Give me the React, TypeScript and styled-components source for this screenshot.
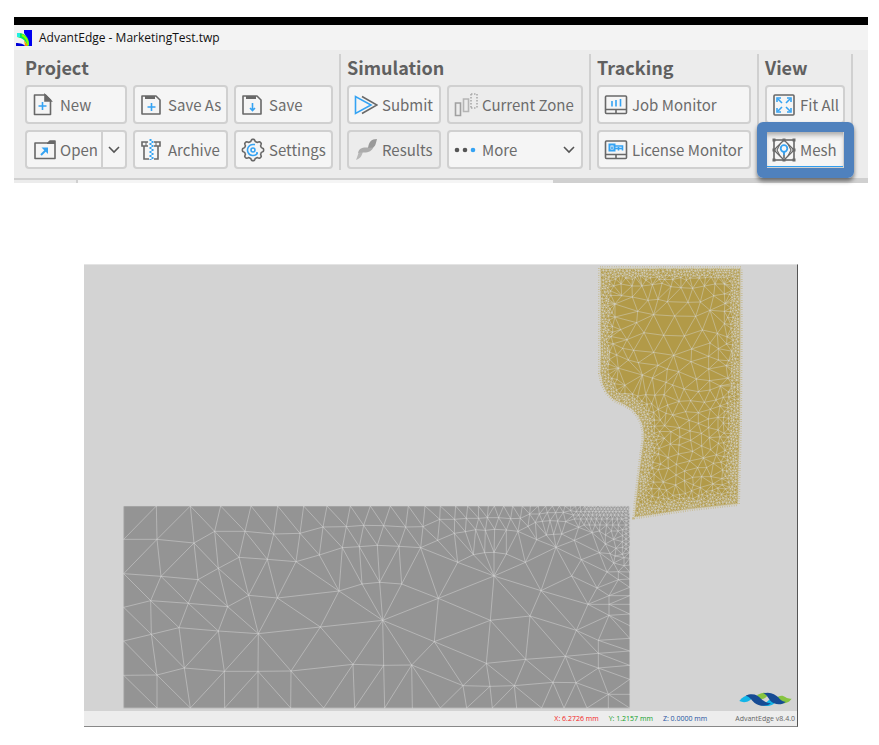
import React from "react";
import styled, { createGlobalStyle, css } from "styled-components";

const GlobalStyle = createGlobalStyle`
  * { box-sizing: border-box; }
  body { margin: 0; background: #fff; color: #666; font-family: "Noto Sans CJK SC", "Open Sans", sans-serif; }
`;

/* ---------- mesh geometry (three drawing units per pixel) ---------- */

type Pt = [number, number];

const shift = (points: Pt[], dx: number, dy: number): Pt[] =>
  points.map(([x, y]) => [x + dx, y + dy]);

const row = (y: number, xs: number[]): Pt[] => xs.map((x) => [x, y]);
const column = (x: number, ys: number[]): Pt[] => ys.map((y) => [x, y]);

function makeRandom(seed: number) {
  let s = seed;
  return () => {
    s = (s * 1664525 + 1013904223) % 4294967296;
    return s / 4294967296;
  };
}

interface Tri { a: number; b: number; c: number; x: number; y: number; r: number; }

function triangulate(input: Pt[]): { points: Pt[]; triangles: Tri[] } {
  const n = input.length;
  const rnd = makeRandom(7);
  const points: Pt[] = input.map(([x, y]) => [x + rnd() * 0.01, y + rnd() * 0.01]);
  points.push([-90000, -60000], [90000, -60000], [0, 120000]);
  const make = (a: number, b: number, c: number): Tri => {
    const [ax, ay] = points[a];
    const bx = points[b][0] - ax, by = points[b][1] - ay;
    const cx = points[c][0] - ax, cy = points[c][1] - ay;
    const d = 2 * (bx * cy - by * cx) || 1e-9;
    const ux = (cy * (bx * bx + by * by) - by * (cx * cx + cy * cy)) / d;
    const uy = (bx * (cx * cx + cy * cy) - cx * (bx * bx + by * by)) / d;
    return { a, b, c, x: ax + ux, y: ay + uy, r: ux * ux + uy * uy };
  };
  let triangles: Tri[] = [make(n, n + 1, n + 2)];
  for (let i = 0; i < n; i++) {
    const [px, py] = points[i];
    const keep: Tri[] = [];
    const rim = new Map<string, [number, number]>();
    for (const t of triangles) {
      if ((t.x - px) ** 2 + (t.y - py) ** 2 < t.r) {
        for (const [p, q] of [[t.a, t.b], [t.b, t.c], [t.c, t.a]]) {
          const key = p < q ? `${p},${q}` : `${q},${p}`;
          if (rim.has(key)) rim.delete(key);
          else rim.set(key, [p, q]);
        }
      } else keep.push(t);
    }
    rim.forEach(([p, q]) => keep.push(make(p, q, i)));
    triangles = keep;
  }
  return { points, triangles: triangles.filter((t) => t.a < n && t.b < n && t.c < n) };
}

function inside(poly: Pt[], x: number, y: number) {
  let hit = false;
  for (let i = 0, j = poly.length - 1; i < poly.length; j = i++) {
    const [xi, yi] = poly[i], [xj, yj] = poly[j];
    if (yi > y !== yj > y && x < ((xj - xi) * (y - yi)) / (yj - yi) + xi) hit = !hit;
  }
  return hit;
}

function edgeDistance(poly: Pt[], x: number, y: number) {
  let best = 1e9;
  for (let i = 0, j = poly.length - 1; i < poly.length; j = i++) {
    const [ax, ay] = poly[j], [bx, by] = poly[i];
    const dx = bx - ax, dy = by - ay;
    const t = Math.max(0, Math.min(1, ((x - ax) * dx + (y - ay) * dy) / (dx * dx + dy * dy)));
    best = Math.min(best, Math.hypot(x - ax - t * dx, y - ay - t * dy));
  }
  return best;
}

function meshPaths(input: Pt[], poly?: Pt[]) {
  const { points, triangles } = triangulate(input);
  const edges = new Set<string>();
  for (const t of triangles) {
    const cx = (points[t.a][0] + points[t.b][0] + points[t.c][0]) / 3;
    const cy = (points[t.a][1] + points[t.b][1] + points[t.c][1]) / 3;
    if (poly && !inside(poly, cx, cy)) continue;
    for (const [p, q] of [[t.a, t.b], [t.b, t.c], [t.c, t.a]]) edges.add(p < q ? `${p},${q}` : `${q},${p}`);
  }
  const f = (v: number) => v.toFixed(1);
  let lines = "";
  edges.forEach((key) => {
    const [p, q] = key.split(",").map(Number);
    lines += `M${f(points[p][0])} ${f(points[p][1])}L${f(points[q][0])} ${f(points[q][1])}`;
  });
  const nodes = input.map(([x, y]) => `M${f(x - 1)} ${f(y)}h2`).join("");
  return { lines, nodes };
}

const coarsePart: Pt[] = [
  ...row(33, [41, 139, 241, 332, 423, 503, 581, 651, 721, 781]),
  [41, 133], [141, 133], [252, 144], [314, 109], [405, 109], [491, 117], [570, 115], [639, 96], [709, 95], [761, 91],
  [41, 236], [153, 244], [264, 254], [325, 220], [387, 187], [472, 193], [558, 200], [628, 180], [697, 158], [748, 155],
  [41, 337], [122, 317], [235, 325], [353, 335], [416, 301], [502, 309], [687, 288], [756, 267],
  [41, 438], [124, 418], [207, 398], [325, 408], [445, 416], [631, 396],
  [41, 541], [141, 540], [223, 519], [343, 529], [444, 529], [543, 528], [729, 508],
  ...row(639, [41, 141, 241, 344, 444, 542, 641, 734]),
];

const finePart: Pt[] = [
  ...row(33, [61, 115, 165, 211, 257, 293, 325, 355, 373, 401, 428, 457, 481, 505, 527, 547, 568, 585, 602, 617, 631, 644, 656, 668, 679, 689, 699, 709, 719, 729, 739, 749, 759, 769, 779]),
  [41, 92], [107, 96], [159, 95], [209, 73], [254, 73], [289, 70], [326, 70], [352, 68], [386, 68], [422, 71], [451, 70],
  [479, 57], [508, 57], [532, 53], [557, 53], [580, 52], [602, 47], [496, 82], [517, 79], [540, 77], [563, 78], [587, 80],
  [87, 154], [152, 158], [203, 136], [253, 115], [286, 110], [317, 104], [346, 106], [374, 103], [409, 105], [444, 109], [474, 94],
  [22, 151], [29, 262], [95, 267], [263, 202], [310, 179], [344, 173], [372, 172], [409, 177], [466, 202], [500, 134], [372, 243],
  [205, 310], [513, 287], [605, 243], [558, 157], [529, 120], [551, 118], [575, 117], [613, 136], [634, 194], [626, 97],
  [666, 113], [688, 173], [706, 147], [706, 120], [711, 231], [731, 204], [745, 230], [745, 254], [681, 279], [654, 328],
  [717, 302], [717, 328], [717, 361], [38, 376], [361, 376], [480, 363], [619, 406], [193, 440], [685, 436], [685, 475],
  [685, 519], [586, 484], [467, 493], [349, 505], [125, 510], [41, 511], [279, 572], [360, 574], [433, 572], [549, 562],
  [618, 563], [715, 598], [720, 176], [738, 160], [731, 133], [735, 183],
  ...row(42, [650, 663, 674, 684, 694, 704, 714, 724, 734, 744, 754, 764, 773]),
  ...row(50, [619, 632, 645, 657, 668, 678, 688, 698, 708, 718, 728, 738, 748, 758, 768]),
  ...row(60, [610, 626, 641, 655, 667, 679, 690, 701, 712, 723, 734, 745, 756]),
  ...row(72, [613, 632, 650, 664, 679, 695, 711, 727, 742, 755]),
  ...row(90, [642, 658, 675, 690, 710, 728, 745]),
  ...row(108, [688, 724, 744]),
  ...column(768, [60, 69, 78, 90, 102, 116, 132, 147, 162]),
  ...column(757, [104, 122, 140, 157, 178]),
  ...column(762, [188, 212]),
  ...column(779, [43, 53, 63, 74, 85, 97, 110, 125, 140, 155, 172, 190, 210, 231, 252, 277, 302, 328, 357, 392, 430, 468, 511, 553, 598]),
  ...row(639, [44, 127, 211, 290, 367, 440, 515, 582, 651, 715, 779]),
];

const workpiece = meshPaths([...coarsePart, ...shift(finePart, 780, 0)]);

const toolOutline: Pt[] = [
  [30, 24], [452, 24], [452, 240], [450, 500], [446, 640], [444, 732], [300, 748], [165, 768], [133, 772],
  [136, 735], [141, 690], [147, 640], [153, 590], [160, 540], [160, 515], [155, 490], [144, 468], [126, 448],
  [102, 434], [72, 420], [50, 398], [37, 372], [30, 340],
];

const toolNodes: Pt[] = [
  [93, 72], [126, 78], [156, 78], [187, 74], [216, 70], [243, 80], [273, 83], [308, 85], [343, 78], [375, 72], [403, 72],
  [95, 107], [127, 111], [174, 121], [204, 118], [232, 125], [294, 127], [331, 126], [371, 107], [403, 102],
  [143, 154], [191, 164], [254, 168], [317, 169], [360, 151], [403, 154], [140, 188], [162, 218], [221, 226], [283, 228],
  [337, 210], [382, 220], [92, 209], [111, 239], [131, 271], [191, 277], [251, 286], [305, 267], [360, 249], [303, 305],
  [356, 289], [356, 327], [204, 316], [232, 327], [266, 335], [319, 357], [157, 345], [115, 300], [145, 308], [187, 354],
  [282, 387], [228, 367], [359, 362], [403, 191], [385, 266], [385, 300], [75, 132], [75, 171], [98, 265],
  ...shift([
    [248, 15], [360, 30], [391, 18], [325, 35], [302, 62], [343, 67], [378, 60], [267, 64], [233, 75], [287, 95], [325, 98],
    [361, 88], [390, 78], [248, 105], [297, 121], [355, 117], [325, 130], [384, 112], [228, 100], [268, 143], [300, 153],
    [356, 143], [358, 173], [384, 150], [302, 181], [270, 171], [335, 198], [385, 190], [362, 209], [308, 214], [267, 195],
    [340, 234], [299, 243], [370, 250], [265, 222], [259, 253], [234, 233], [323, 263], [350, 263], [284, 273], [308, 292],
    [335, 290], [363, 290], [258, 285], [283, 302], [310, 315], [235, 265], [241, 192], [243, 155], [223, 175], [401, 230], [398, 270],
  ], 0, 360),
];

function fillTool(): Pt[] {
  const rnd = makeRandom(31);
  const out: Pt[] = [...toolNodes];
  for (let i = 0; i < toolOutline.length; i++) {
    const [ax, ay] = toolOutline[i];
    const [bx, by] = toolOutline[(i + 1) % toolOutline.length];
    const steps = Math.max(1, Math.round(Math.hypot(bx - ax, by - ay) / 6));
    for (let k = 0; k < steps; k++) out.push([ax + ((bx - ax) * k) / steps, ay + ((by - ay) * k) / steps]);
  }
  for (let k = 0; k < 30000; k++) {
    const x = 30 + rnd() * 422;
    const y = 24 + rnd() * 748;
    if (!inside(toolOutline, x, y)) continue;
    const d = edgeDistance(toolOutline, x, y);
    const widest = y < 400 ? 46 : 27;
    const growth = y < 400 ? 0.8 : 0.35;
    const gap = Math.min(widest, d < 26 ? 6.5 : 6.5 + (d - 26) * growth);
    if (out.every(([px, py]) => (px - x) ** 2 + (py - y) ** 2 > gap * gap)) out.push([x, y]);
  }
  return out;
}

const tool = meshPaths(fillTool(), toolOutline);
const toolShape = "M" + toolOutline.map((p) => p.join(" ")).join("L") + "Z";

/* ---------- layout ---------- */

const Page = styled.main`
  padding: 17px 11px 18px 14px;
`;

const Window = styled.header`
  border-top: 8px solid #000;
  background: #ececec;
`;

const TitleBar = styled.div`
  display: flex;
  align-items: center;
  gap: 7px;
  height: 25px;
  padding-left: 2px;
  background: #f3f3f3;
  color: #111;
  font: 12px/24px "Open Sans", "Noto Sans", sans-serif;
`;

const Ribbon = styled.div`
  display: flex;
  align-items: flex-start;
  padding: 4px 0 8px 11px;
  border-bottom: 2px solid #d0d0d0;
`;

const Group = styled.section`
  height: 116px;
  padding-right: 6px;
  margin-right: 6px;
  border-right: 2px solid #d0d0d0;
`;

const GroupTitle = styled.h2`
  margin: 0;
  height: 31px;
  font-size: 18px;
  line-height: 26px;
  font-weight: 700;
  color: #606060;
`;

const Grid = styled.div<{ $columns: string }>`
  display: grid;
  grid-template-columns: ${(p) => p.$columns};
  grid-auto-rows: 39px;
  gap: 6px;
`;

const face = css<{ $muted?: boolean }>`
  border: 2px solid #d0d0d0;
  background: ${(p) => (p.$muted ? "#ececec" : "#f5f5f5")};
  color: #6c6c6c;
  font: 15px/24px "Noto Sans CJK SC", sans-serif;
`;

const ToolButton = styled.button<{ $muted?: boolean }>`
  ${face}
  position: relative;
  display: flex;
  align-items: center;
  gap: 4px;
  min-width: 0;
  padding: 0 0 0 5px;
  border-radius: 4px;
  white-space: nowrap;
  text-align: left;
`;

const SplitButton = styled.div`
  display: grid;
  grid-template-columns: 1fr 26px;
`;

const SplitMain = styled(ToolButton)`
  border-radius: 4px 0 0 4px;
  border-right-width: 0;
`;

const SplitArrow = styled.button`
  ${face}
  display: grid;
  place-items: center;
  padding: 0;
  border-radius: 0 4px 4px 0;
`;

const Push = styled.span`
  display: flex;
  margin-left: auto;
  padding-right: 6px;
`;

const HighlightedButton = styled(ToolButton)`
  &::before {
    content: "";
    position: absolute;
    inset: 0;
    border-bottom: 1px solid #2f9df0;
    box-shadow: inset 0 5px 5px -2px #aaa;
  }
  &::after {
    content: "";
    position: absolute;
    inset: -10px -11px -11px -10px;
    border: 10px solid #4f81bd;
    border-radius: 6px;
    box-shadow: 0 3px 4px rgba(0, 0, 0, 0.5);
  }
`;

const TabStrip = styled.div`
  display: grid;
  grid-template-columns: 64px 475px 1fr;
  height: 3px;
  background: #d0d0d0;
`;

const Tab = styled.span<{ $active?: boolean }>`
  background: ${(p) => (p.$active ? "#f5f5f5" : "#ececec")};
  border-right: ${(p) => (p.$active ? 0 : 2)}px solid #d0d0d0;
`;

const Viewport = styled.section`
  margin: 81px 70px 0;
  border-top: 1px solid #e4e4e4;
  border-right: 1px solid #555;
  border-bottom: 1px solid #888;
  background: #d3d3d3;
`;

const Scene = styled.div`
  position: relative;
`;

const Drawing = styled.svg`
  display: block;
  width: 100%;
  height: auto;
`;

const LogoSpot = styled.div`
  position: absolute;
  display: flex;
  right: 5px;
  bottom: 4px;
`;

const StatusBar = styled.footer`
  display: flex;
  justify-content: flex-end;
  gap: 10px;
  height: 15px;
  padding-right: 2px;
  background: #ededed;
  font: 7px/15px "Open Sans", sans-serif;
`;

const Reading = styled.span<{ $color: string }>`
  color: ${(p) => p.$color};
`;

const Version = styled.span`
  margin-left: 18px;
  color: #666;
`;

/* ---------- icons ---------- */

const ink = "#686868";
const blue = "#35a3f3";

const Icon = ({ children }: { children: React.ReactNode }) => (
  <svg width="24" height="24" viewBox="0 0 24 24" fill="none" stroke={ink} strokeWidth="1.6" aria-hidden="true">
    {children}
  </svg>
);

const AppIcon = () => (
  <svg width="16" height="16" viewBox="0 0 16 16" aria-hidden="true">
    <path d="M8 0h8v16h-4C12 10 10 6 8 3z" fill="#0000f0" />
    <path d="M0 13c4 0 8 1 9 3H0z" fill="#0000d8" />
    <path d="M1 3C9 2 14 8 13 16h-2C10 10 6 8 1 7z" fill="#00e85a" />
    <path d="M6 5c4 2 6 6 6 10" stroke="#8cff00" strokeWidth="2" fill="none" />
    <path d="M8 10l4 6H9z" fill="#ff9a00" />
    <path d="M1 3h3v4H1z" fill="#20f0e0" />
  </svg>
);

const NewIcon = () => (
  <Icon>
    <path d="M2.5 2h11l5 5v14.5h-16z" strokeLinejoin="round" />
    <path d="M13 2v6h6z" fill={ink} />
    <path d="M10.5 9v8M6.5 13h8" stroke={blue} />
  </Icon>
);

const DiskIcon = ({ save }: { save?: boolean }) => (
  <Icon>
    <path d="M2 3h14l4 4v14H2z" strokeLinejoin="round" />
    <path d="M5 4.5h10" strokeWidth="3" />
    {save ? (
      <path d="M11.5 10v8M9 15l2.5 2.5L14 15" stroke={blue} />
    ) : (
      <path d="M11.5 10v8M7.5 14h8" stroke={blue} />
    )}
  </Icon>
);

const OpenIcon = () => (
  <Icon>
    <path d="M3 5h13l2-2h5v17.5H3z" strokeLinejoin="round" />
    <path d="M15 5l3-2h5v3h-8z" fill={ink} stroke="none" />
    <path d="M9 17l6-6" stroke={blue} strokeWidth="2" />
    <path d="M9.5 9.5H16V16z" fill={blue} stroke="none" />
  </Icon>
);

const ArchiveIcon = () => (
  <Icon>
    <path d="M8 4H2v4h6M14 4h6v4h-6M4 8v13h5M18 8v13h-4" />
    <path d="M10.5 1v21" stroke={blue} strokeWidth="2" strokeDasharray="2 2" />
    <path d="M12.5 3v20" stroke={blue} strokeWidth="2" strokeDasharray="2 2" />
    <path d="M6 4v4M16 4v4" strokeWidth="1" />
  </Icon>
);

const gearPath = (() => {
  let d = "";
  for (let i = 0; i <= 96; i++) {
    const a = (i / 96) * Math.PI * 2;
    const r = 9.6 + Math.max(-1, Math.min(1, 1.6 * Math.cos(a * 8)));
    d += `${i ? "L" : "M"}${(12 + r * Math.cos(a)).toFixed(2)} ${(12 + r * Math.sin(a)).toFixed(2)}`;
  }
  return d + "Z";
})();

const SettingsIcon = () => (
  <Icon>
    <path d={gearPath} />
    <path d="M12 6.5a5.5 5.5 0 1 0 4.5 8.7" stroke={blue} />
    <circle cx="12" cy="12" r="2" stroke={blue} />
    <path d="M12 6.5h2M16 14v2" stroke={blue} />
  </Icon>
);

const SubmitIcon = () => (
  <Icon>
    <path d="M8 3.5l15 8.5-15 8.5" />
    <path d="M1.5 3.5v17L17 12z" stroke={blue} />
  </Icon>
);

const ResultsIcon = () => (
  <Icon>
    <g stroke="none">
      <path d="M2 22C5 21 8 19 9 13H6C4 14 4 18 2 22z" fill="#b8b8b8" />
      <path d="M4 15C5 10 8 9 15 9.5L20 8C18 13 15 14.500 10 14.500 7 14.500 5 14.500 4 15z" fill="#acacac" />
      <path d="M23 1C17 1 15 4 14 10L19 9.500C22 8 22 4 23 1z" fill="#999" />
    </g>
  </Icon>
);

const ZoneIcon = () => (
  <Icon>
    <path d="M1.5 10h5v12.5h-5z" stroke="#a0a0a0" />
    <path d="M9.5 6h5v12.5h-5z" stroke="#b5b5b5" />
    <path d="M17 1h6M17 15h6M17 1v14M23 1v14" stroke="#aaa" strokeDasharray="1.5 1.5" />
  </Icon>
);

const MoreIcon = () => (
  <Icon>
    <g stroke="none">
      <circle cx="3" cy="12" r="2.3" fill="#555" />
      <circle cx="11" cy="12" r="2.3" fill="#555" />
      <circle cx="19" cy="12" r="2.3" fill={blue} />
    </g>
  </Icon>
);

const MonitorIcon = ({ license }: { license?: boolean }) => (
  <Icon>
    <rect x="1.5" y="3" width="21" height="17.5" rx="1" />
    <path d="M1.5 16.5h21M12 16.5v4" />
    {license ? (
      <g stroke={blue}>
        <path d="M5.5 6.5h5v6h-5z" strokeWidth="2" />
        <path d="M10 8h8.5v4.5M14.5 9v3.5M8 8.5v2.5" />
        <path d="M11 10.5h7" />
      </g>
    ) : (
      <path d="M8 8v5.5M12 7v6.5M16.5 6v7.5" stroke={blue} />
    )}
  </Icon>
);

const FitIcon = () => (
  <Icon>
    <rect x="2" y="2" width="20" height="20" rx="1" />
    <path d="M10 10L6 6M14 10l4-4M10 14l-4 4M14 14l4 4" stroke={blue} />
    <path d="M5 9V5h4M15 5h4v4M5 15v4h4M15 19h4v-4" stroke={blue} />
  </Icon>
);

const MeshIcon = () => (
  <Icon>
    <rect x="2" y="2" width="20" height="20" />
    <path d="M12 2l10 10-10 10L2 12z" strokeWidth="1.3" />
    <path d="M8 6l-3 6 3 6M16 6l3 6-3 6" strokeWidth="1.1" />
    <path d="M12 14v6" />
    <circle cx="12" cy="10.5" r="3.3" stroke={blue} strokeWidth="1.8" />
    <path d="M12 14v3" stroke={blue} />
    <path d="M0.5 2h3M20.5 2h3M0.5 12h3M20.5 12h3M0.5 22h3M20.5 22h3M10.5 2h3M10.5 22h3" strokeWidth="3" />
  </Icon>
);

const Chevron = () => (
  <svg width="12" height="8" viewBox="0 0 12 8" fill="none" stroke="#555" strokeWidth="1.6" aria-hidden="true">
    <path d="M1 1l5 5 5-5" />
  </svg>
);

const WaveLogo = () => (
  <svg width="53" height="15" viewBox="598 36 159 45" aria-hidden="true">
    <path d="M599 63C610 46 628 42 644 48L632 60C620 68 610 68 599 63z" fill="#13b5e8" />
    <path d="M645 56C656 38 672 34 690 42L676 54C664 60 654 60 645 56z" fill="#86c440" />
    <path d="M662 74C678 72 686 62 696 52L714 58C704 76 686 84 662 74z" fill="#13b5e8" />
    <path d="M704 60C716 46 728 44 738 52C744 56 750 57 756 56C748 68 736 70 728 70C718 72 708 68 704 60z" fill="#86c440" />
    <path d="M618 47C640 38 654 46 664 56C672 64 682 70 694 70C680 82 656 78 644 68C634 58 630 50 618 47z" fill="#164b94" />
    <path d="M670 40C692 34 706 42 716 52C722 60 728 66 738 65C726 77 702 74 692 62C684 52 682 44 670 40z" fill="#164b94" />
  </svg>
);

/* ---------- page ---------- */

export default function App() {
  return (
    <>
      <GlobalStyle />
      <Page>
        <Window>
          <TitleBar>
            <AppIcon />
            <span>AdvantEdge - MarketingTest.twp</span>
          </TitleBar>
          <Ribbon>
            <Group>
              <GroupTitle>Project</GroupTitle>
              <Grid $columns="102px 95px 99px">
                <ToolButton><NewIcon />New</ToolButton>
                <ToolButton><DiskIcon />Save As</ToolButton>
                <ToolButton><DiskIcon save />Save</ToolButton>
                <SplitButton>
                  <SplitMain><OpenIcon />Open</SplitMain>
                  <SplitArrow aria-label="Open options"><Chevron /></SplitArrow>
                </SplitButton>
                <ToolButton><ArchiveIcon />Archive</ToolButton>
                <ToolButton><SettingsIcon />Settings</ToolButton>
              </Grid>
            </Group>
            <Group>
              <GroupTitle>Simulation</GroupTitle>
              <Grid $columns="94px 136px">
                <ToolButton><SubmitIcon />Submit</ToolButton>
                <ToolButton $muted><ZoneIcon />Current Zone</ToolButton>
                <ToolButton $muted><ResultsIcon />Results</ToolButton>
                <ToolButton><MoreIcon />More<Push><Chevron /></Push></ToolButton>
              </Grid>
            </Group>
            <Group>
              <GroupTitle>Tracking</GroupTitle>
              <Grid $columns="154px">
                <ToolButton><MonitorIcon />Job Monitor</ToolButton>
                <ToolButton><MonitorIcon license />License Monitor</ToolButton>
              </Grid>
            </Group>
            <Group>
              <GroupTitle>View</GroupTitle>
              <Grid $columns="80px">
                <ToolButton><FitIcon />Fit All</ToolButton>
                <HighlightedButton><MeshIcon />Mesh</HighlightedButton>
              </Grid>
            </Group>
          </Ribbon>
          <TabStrip><Tab /><Tab $active /></TabStrip>
        </Window>

        <Viewport>
          <Scene>
            <Drawing viewBox="0 0 2139 1338" role="img" aria-label="Workpiece and cutting tool mesh">
              <g transform="translate(78 690)" fill="none">
                <path d="M40 33h1520v607H40z" fill="#949494" />
                <path d={workpiece.lines} stroke="#d0d0d0" strokeOpacity="0.55" strokeWidth="3" />
                <path d={workpiece.nodes} stroke="#d8d8d8" strokeOpacity="0.6" strokeWidth="3" />
              </g>
              <g transform="translate(1518 -15)" fill="none">
                <path d={toolShape} stroke="#c4b687" strokeWidth="12" strokeDasharray="2 5" />
                <path d={toolShape} fill="#b29a48" />
                <path d={tool.lines} stroke="#d3d1c5" strokeOpacity="0.6" strokeWidth="2.5" />
                <path d={tool.nodes} stroke="#dadada" strokeOpacity="0.7" strokeWidth="3" />
              </g>
            </Drawing>
            <LogoSpot><WaveLogo /></LogoSpot>
          </Scene>
          <StatusBar>
            <Reading $color="#f21c1c">X: 6.2726 mm</Reading>
            <Reading $color="#0f9e1f">Y: 1.2157 mm</Reading>
            <Reading $color="#2450a0">Z: 0.0000 mm</Reading>
            <Version>AdvantEdge v8.4.0</Version>
          </StatusBar>
        </Viewport>
      </Page>
    </>
  );
}
